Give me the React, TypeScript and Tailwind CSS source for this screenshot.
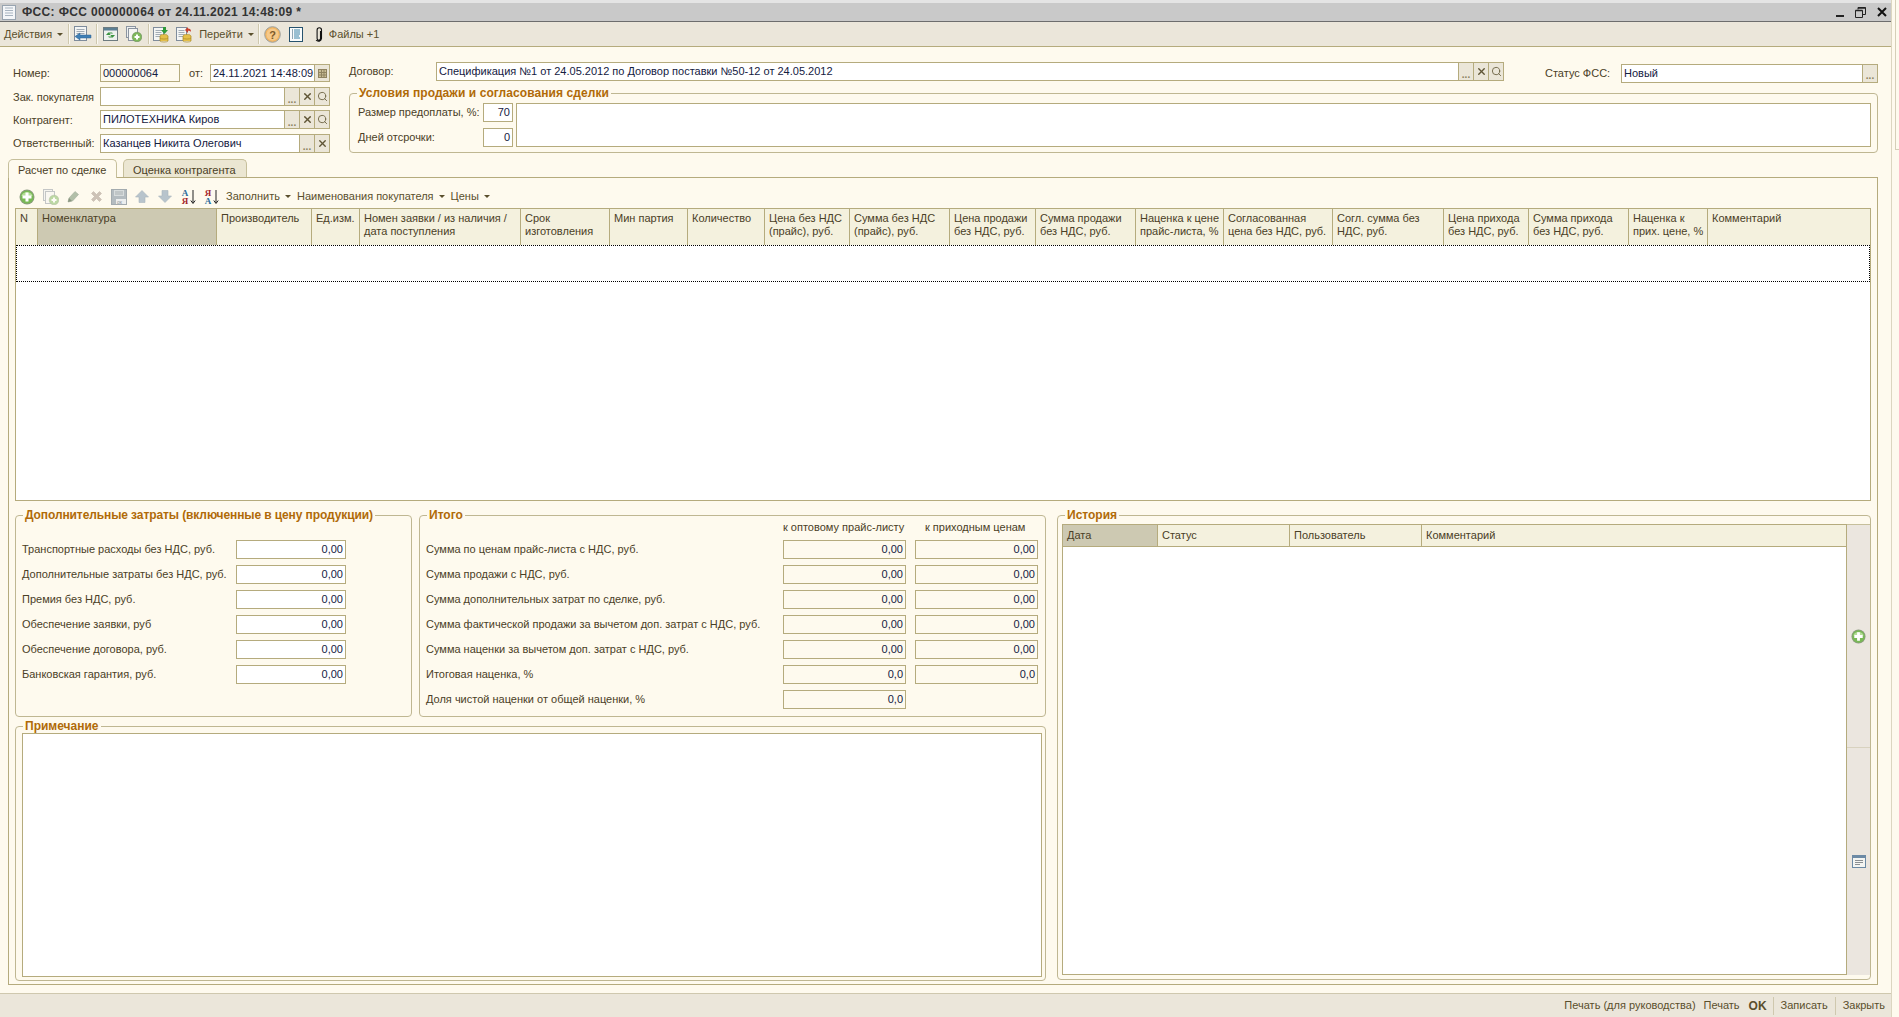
import { Search, X } from "lucide-react";
import type { ReactNode } from "react";

// column headers of the main table
const columns = [
  ["N"],
  ["Номенклатура"],
  ["Производитель"],
  ["Ед.изм."],
  ["Номен заявки / из наличия /", "дата поступления"],
  ["Срок", "изготовления"],
  ["Мин партия"],
  ["Количество"],
  ["Цена без НДС", "(прайс), руб."],
  ["Сумма без НДС", "(прайс), руб."],
  ["Цена продажи", "без НДС, руб."],
  ["Сумма продажи", "без НДС, руб."],
  ["Наценка к цене", "прайс-листа, %"],
  ["Согласованная", "цена без НДС, руб."],
  ["Согл. сумма без", "НДС, руб."],
  ["Цена прихода", "без НДС, руб."],
  ["Сумма прихода", "без НДС, руб."],
  ["Наценка к", "прих. цене, %"],
  ["Комментарий"],
];

const costRows = [
  "Транспортные расходы без НДС, руб.",
  "Дополнительные затраты без НДС, руб.",
  "Премия без НДС, руб.",
  "Обеспечение заявки, руб",
  "Обеспечение договора, руб.",
  "Банковская гарантия, руб.",
];

const totalRows = [
  ["Сумма по ценам прайс-листа с НДС, руб.", "0,00", "0,00"],
  ["Сумма продажи с НДС, руб.", "0,00", "0,00"],
  ["Сумма дополнительных затрат по сделке, руб.", "0,00", "0,00"],
  ["Сумма фактической продажи за вычетом доп. затрат с НДС, руб.", "0,00", "0,00"],
  ["Сумма наценки за вычетом доп. затрат с НДС, руб.", "0,00", "0,00"],
  ["Итоговая наценка, %", "0,0", "0,0"],
  ["Доля чистой наценки от общей наценки, %", "0,0", ""],
];

function Arrow() {
  return <span className="ml-[5px] inline-block h-0 w-0 border-x-[3px] border-t-[3px] border-x-transparent border-t-[#5a4f2c]" />;
}

function Sep({ className = "" }: { className?: string }) {
  return <span className={`h-[20px] w-[2px] border-r border-l border-r-[#fbf9f2] border-l-[#cfc8ae] ${className}`} />;
}

function GreenPlus({ size = 16 }: { size?: number }) {
  return (
    <svg width={size} height={size} viewBox="0 0 16 16">
      <circle cx="8" cy="8" r="7.5" fill="#8c9a80" />
      <circle cx="8" cy="8" r="6.6" fill="#79b956" />
      <path d="M2.5 7a5.6 4.6 0 0 1 11 0z" fill="#b4dc98" />
      <path d="M6.5 3.5h3v3h3v3h-3v3h-3v-3h-3v-3h3z" fill="#fff" />
    </svg>
  );
}

function DocLines({ x = 0.5, y = 0.5, w = 10, h = 13, color = "#7f8c9c" }) {
  return (
    <g>
      <rect x={x} y={y} width={w} height={h} fill="#f4f5f4" stroke={color} />
      <path d={`M${x + 2} ${y + 3}h${w - 4}M${x + 2} ${y + 5}h${w - 4}M${x + 2} ${y + 7}h${w - 4}M${x + 2} ${y + 9}h${w - 5}`} stroke="#a3acb5" />
    </g>
  );
}

function Coins() {
  return (
    <g>
      <ellipse cx="11" cy="10" rx="4" ry="1.6" fill="#e5c04a" stroke="#a98a24" strokeWidth=".6" />
      <rect x="7" y="10" width="8" height="5" fill="#e5c04a" />
      <path d="M7 10v5M15 10v5M7 12c1 1.4 7 1.4 8 0M7 15c1 1.4 7 1.4 8 0" stroke="#a98a24" strokeWidth=".7" fill="none" />
    </g>
  );
}

function BackIcon() {
  return (
    <svg width="18" height="16" viewBox="0 0 18 16">
      <DocLines x={0.5} y={0.5} w={12} h={14} />
      <path d="M1 10.5l5-3.5v2h11v3H6v2z" fill="#3f7fb5" stroke="#2e6390" strokeWidth=".5" />
    </svg>
  );
}

function RefreshIcon() {
  return (
    <svg width="15" height="14" viewBox="0 0 15 14">
      <rect x=".5" y=".5" width="14" height="13" fill="#eef1ee" stroke="#6d7b80" />
      <rect x="1" y="1" width="13" height="2.5" fill="#5c7f93" />
      <path d="M3 8l2.2-2.6H9l1 1.2H6.5L7.6 8zM12 8l-2.2 2.6H6L5 9.4h3.5L7.4 8z" fill="#3b9440" />
    </svg>
  );
}

function PagesPlus({ faded = false }: { faded?: boolean }) {
  return (
    <svg width="16" height="16" viewBox="0 0 16 16" className={faded ? "opacity-50" : ""}>
      <rect x=".5" y=".5" width="9" height="11" fill="#eef0f0" stroke="#8b94a0" />
      <rect x="2.5" y="2.5" width="9" height="12" fill="#f6f6f4" stroke="#8b94a0" />
      <circle cx="11" cy="11" r="4.8" fill="#7db85b" stroke="#6b8a5c" strokeWidth=".6" />
      <path d="M10 8.5h2v1.5h1.5v2H12v1.5h-2V12H8.5v-2H10z" fill="#fff" />
    </svg>
  );
}

function CoinDoc({ color, up = false }: { color: string; up?: boolean }) {
  return (
    <svg width="17" height="17" viewBox="0 0 17 17">
      <DocLines x={0.5} y={1.5} w={10} h={13} />
      <Coins />
      <path d={up ? "M9 4l3-3v1.6c2 0 3 1 3 3.4-.8-1-1.6-1.2-3-1.2V7z" : "M8 4h2V1h3v3h2l-3.5 4z"} fill={color} />
    </svg>
  );
}

function HelpIcon() {
  return (
    <svg width="17" height="17" viewBox="0 0 17 17">
      <circle cx="8.5" cy="8.5" r="7.8" fill="#f2b561" stroke="#9aa0a0" />
      <circle cx="8.5" cy="8.5" r="6" fill="#f6c98a" />
      <text x="8.5" y="12.5" textAnchor="middle" fontSize="11" fontWeight="700" fill="#7d5a2a" fontFamily="Liberation Sans, sans-serif">?</text>
    </svg>
  );
}

function ListIcon() {
  return (
    <svg width="14" height="15" viewBox="0 0 14 15">
      <rect x=".5" y=".5" width="13" height="14" fill="#f9fbfb" stroke="#26526e" />
      <path d="M3 3h1M3 5h1M3 7h1M3 9h1M3 11h1" stroke="#26526e" />
      <path d="M5 3h6M5 5h6M5 7h6M5 9h5M5 11h6" stroke="#3b84a8" />
    </svg>
  );
}

function ClipIcon() {
  return (
    <svg width="8" height="15" viewBox="0 0 8 15">
      <path d="M5.5 4v7.5a1.7 1.7 0 0 1-3.4 0V3a2.2 2.2 0 0 1 4.4 0v8.5a3 3 0 0 1-5.4 1.5" fill="none" stroke="#111" strokeWidth="1.1" />
    </svg>
  );
}

function Pencil() {
  return (
    <svg width="13" height="13" viewBox="0 0 13 13">
      <path d="M1 12l1-4 6-6.5 3.5 3L5.5 11z" fill="#b2bfa8" stroke="#a3ad9c" strokeWidth=".6" />
      <path d="M1 12l1-4 3 3z" fill="#8a9680" />
    </svg>
  );
}

function GrayX() {
  return (
    <svg width="13" height="13" viewBox="0 0 13 13">
      <path d="M1.5 3.5l2-2 3 3 3-3 2 2-3 3 3 3-2 2-3-3-3 3-2-2 3-3z" fill="#cdc2b6" stroke="#bdb1a4" strokeWidth=".5" />
    </svg>
  );
}

function SaveIcon() {
  return (
    <svg width="16" height="16" viewBox="0 0 16 16">
      <rect x=".5" y=".5" width="15" height="15" fill="#b4bcc0" stroke="#a3abaf" />
      <rect x="3" y="1" width="10" height="6" fill="#d7dcdc" />
      <path d="M4 3h8M4 5h8" stroke="#a9b0b2" />
      <rect x="5" y="10" width="10" height="5" fill="#eceeee" />
      <text x="6" y="14.5" fontSize="5" fill="#8c9498" fontFamily="Liberation Sans, sans-serif">ок</text>
    </svg>
  );
}

function MoveIcon({ down = false }: { down?: boolean }) {
  return (
    <svg width="14" height="13" viewBox="0 0 14 13" className={down ? "rotate-180" : ""}>
      <path d="M7 .5L13.5 7H10v5.5H4V7H.5z" fill="#b8c4cc" stroke="#a9b5bd" strokeWidth=".6" />
    </svg>
  );
}

function SortIcon({ reverse = false }: { reverse?: boolean }) {
  const top = reverse ? "Я" : "A";
  const bottom = reverse ? "A" : "Я";
  return (
    <svg width="16" height="17" viewBox="0 0 16 17">
      <text x="5" y="7.5" textAnchor="middle" fontSize="9" fontWeight="700" fill={reverse ? "#a3262a" : "#2a6a9a"} fontFamily="Liberation Serif, serif">{top}</text>
      <text x="5" y="16" textAnchor="middle" fontSize="9" fontWeight="700" fill={reverse ? "#2a6a9a" : "#a3262a"} fontFamily="Liberation Serif, serif">{bottom}</text>
      <path d="M13 2v13M10.8 12.5L13 15.5l2.2-3" stroke="#222" fill="none" />
    </svg>
  );
}

function CalendarIcon() {
  return (
    <svg width="9" height="9" viewBox="0 0 9 9">
      <rect x=".5" y=".5" width="8" height="8" fill="#c9bd95" stroke="#8f8360" />
      <path d="M.5 3.5h8M.5 6h8M3.5 .5v8M6 .5v8" stroke="#8f8360" />
    </svg>
  );
}

function FieldButton({ kind }: { kind: string }) {
  return (
    <span className="flex h-full w-[15px] shrink-0 items-center justify-center border-l border-[#b5ab7d] bg-[#ebe6d8]">
      {kind === "dots" && <span className="mt-[6px] text-[10px] leading-none font-bold text-[#8b8260]">...</span>}
      {kind === "clear" && <X size={11} strokeWidth={3} className="text-[#5f5535]" />}
      {kind === "search" && <Search size={11} strokeWidth={2} className="text-[#6f6545]" />}
      {kind === "date" && <CalendarIcon />}
    </span>
  );
}

function Field({
  value = "",
  className = "",
  right = false,
  buttons = [],
  tinted = false,
}: {
  value?: string;
  className?: string;
  right?: boolean;
  buttons?: string[];
  tinted?: boolean;
}) {
  return (
    <div className={`box-border flex border border-[#b5ab7d] ${tinted ? "bg-[#fefaee]" : "bg-white"} ${className}`}>
      <span className={`flex-1 overflow-hidden pr-[2px] pl-[2px] leading-[17px] whitespace-nowrap text-[#14203f] ${right ? "text-right" : ""}`}>{value}</span>
      {buttons.map((b) => (
        <FieldButton key={b} kind={b} />
      ))}
    </div>
  );
}

function Group({
  title,
  titleClass = "",
  className = "",
  children,
}: {
  title: string;
  titleClass?: string;
  className?: string;
  children?: ReactNode;
}) {
  return (
    <div className={`relative box-border rounded-[4px] border border-[#bfb792] ${className}`}>
      <span className={`absolute -top-[8px] left-[7px] bg-[#fefaee] px-[2px] text-[12px] leading-[14px] font-bold whitespace-nowrap text-[#b06a08] ${titleClass}`}>{title}</span>
      {children}
    </div>
  );
}

function TitleBar() {
  return (
    <div className="flex h-[22px] shrink-0 items-center border-t-[3px] border-b border-t-[#e4e4e4] border-b-[#6d6d6d] bg-[#c9c9c9] pr-[4px] pl-[2px]">
      <svg width="14" height="15" viewBox="0 0 14 15">
        <rect x=".5" y=".5" width="13" height="14" fill="#f4f6f8" stroke="#98a4b0" />
        <path d="M3 3h8M3 5.5h8M3 8h8M3 10.5h8" stroke="#a8b4c0" />
      </svg>
      <span className="ml-[6px] text-[12px] font-bold tracking-[0.35px] text-[#333]">ФСС: ФСС 000000064 от 24.11.2021 14:48:09 *</span>
      <div className="ml-auto flex items-center">
        <span className="mt-[8px] h-[2px] w-[8px] bg-[#222]" />
        <svg width="11" height="11" viewBox="0 0 11 11" className="ml-[11px]">
          <path d="M3 2.5V.5h7.5v7H8M.5 3.5h7v7h-7z" fill="none" stroke="#222" />
          <path d="M.5 3.5h7M3 1h7.5" stroke="#222" strokeWidth="1.4" />
        </svg>
        <svg width="10" height="10" viewBox="0 0 10 10" className="ml-[11px]">
          <path d="M1 1l8 8M9 1l-8 8" stroke="#111" strokeWidth="2" />
        </svg>
      </div>
    </div>
  );
}

function MainToolbar() {
  return (
    <div className="flex h-[25px] shrink-0 items-center border-b border-[#b5ab7d] bg-[#ebe6da] pl-[4px] text-[#5a4f2c]">
      <span>Действия</span>
      <Arrow />
      <Sep className="mr-[4px] ml-[5px]" />
      <BackIcon />
      <Sep className="mr-[4px] ml-[4px]" />
      <span className="ml-[1px]"><RefreshIcon /></span>
      <span className="ml-[8px]"><PagesPlus /></span>
      <Sep className="mr-[3px] ml-[6px]" />
      <CoinDoc color="#2f9a3a" />
      <span className="ml-[6px]"><CoinDoc color="#c8402f" up /></span>
      <span className="ml-[6px]">Перейти</span>
      <Arrow />
      <Sep className="mr-[4px] ml-[4px]" />
      <HelpIcon />
      <span className="ml-[8px]"><ListIcon /></span>
      <span className="ml-[12px]"><ClipIcon /></span>
      <span className="ml-[6px]">Файлы +1</span>
    </div>
  );
}

function HeaderForm() {
  return (
    <div className="flex shrink-0 pt-[15px] pr-[14px] pl-[13px]">
      <div className="w-[317px] shrink-0 pt-[2px]">
        <div className="flex h-[18px] items-center">
          <span className="w-[87px] pt-[1px]">Номер:</span>
          <Field value="000000064" tinted className="h-[18px] w-[80px]" />
          <span className="ml-[9px] w-[21px] pt-[1px]">от:</span>
          <Field value="24.11.2021 14:48:09" buttons={["date"]} className="h-[18px] w-[120px]" />
        </div>
        <div className="mt-[5px] flex h-[19px] items-center">
          <span className="w-[87px] pt-[1px]">Зак. покупателя</span>
          <Field buttons={["dots", "clear", "search"]} className="h-[19px] w-[230px]" />
        </div>
        <div className="mt-[4px] flex h-[19px] items-center">
          <span className="w-[87px] pt-[1px]">Контрагент:</span>
          <Field value="ПИЛОТЕХНИКА Киров" buttons={["dots", "clear", "search"]} className="h-[19px] w-[230px]" />
        </div>
        <div className="mt-[5px] flex h-[19px] items-center">
          <span className="w-[87px]">Ответственный:</span>
          <Field value="Казанцев Никита Олегович" buttons={["dots", "clear"]} className="h-[19px] w-[230px]" />
        </div>
      </div>
      <div className="ml-[19px] flex-1">
        <div className="flex h-[19px] items-center">
          <span className="w-[87px]">Договор:</span>
          <Field value="Спецификация №1 от 24.05.2012 по Договор поставки №50-12 от 24.05.2012" buttons={["dots", "clear", "search"]} className="h-[19px] w-[1068px]" />
          <span className="mt-[3px] ml-[41px] w-[76px]">Статус ФСС:</span>
          <Field value="Новый" buttons={["dots"]} className="mt-[3px] h-[19px] w-[257px]" />
        </div>
        <Group title="Условия продажи и согласования сделки" titleClass="tracking-[0.08px]" className="mt-[12px] flex h-[60px] pt-[9px] pr-[6px] pl-[8px]">
          <div className="w-[155px] shrink-0">
            <div className="flex h-[19px] items-center justify-between">
              <span className="whitespace-nowrap">Размер предоплаты, %:</span>
              <Field value="70" right className="h-[19px] w-[30px] shrink-0" />
            </div>
            <div className="mt-[6px] flex h-[19px] items-center justify-between">
              <span className="whitespace-nowrap">Дней отсрочки:</span>
              <Field value="0" right className="h-[19px] w-[30px] shrink-0" />
            </div>
          </div>
          <div className="ml-[3px] h-[44px] flex-1 border border-[#b5ab7d] bg-white" />
        </Group>
      </div>
    </div>
  );
}

function GridToolbar() {
  return (
    <div className="flex h-[30px] shrink-0 items-center pt-[7px] pl-[4px] text-[#5a4f2c]">
      <GreenPlus />
      <span className="ml-[8px]"><PagesPlus faded /></span>
      <span className="ml-[8px]"><Pencil /></span>
      <span className="ml-[10px]"><GrayX /></span>
      <span className="ml-[8px]"><SaveIcon /></span>
      <span className="ml-[8px]"><MoveIcon /></span>
      <span className="ml-[9px]"><MoveIcon down /></span>
      <span className="ml-[8px]"><SortIcon /></span>
      <span className="ml-[7px]"><SortIcon reverse /></span>
      <span className="ml-[7px]">Заполнить</span>
      <Arrow />
      <span className="ml-[6px]">Наименования покупателя</span>
      <Arrow />
      <span className="ml-[6px]">Цены</span>
      <Arrow />
    </div>
  );
}

function MainGrid() {
  return (
    <div className="flex h-[293px] shrink-0 flex-col border border-[#b5ab7d] bg-white">
      <div className="grid h-[36px] shrink-0 grid-cols-[22px_179px_95px_48px_161px_89px_78px_77px_85px_100px_86px_100px_88px_109px_111px_85px_100px_79px_1fr] bg-[#f4f1de]">
        {columns.map((lines, i) => (
          <div key={lines[0]} className={`border-r border-[#b5ab7d] pt-[3px] pl-[4px] leading-[13px] whitespace-nowrap ${i === 1 ? "bg-[#cdc9b2]" : ""} ${i === columns.length - 1 ? "border-r-0" : ""}`}>
            {lines.map((line) => (
              <div key={line}>{line}</div>
            ))}
          </div>
        ))}
      </div>
      <div className="h-[37px] shrink-0 border border-dotted border-black" />
    </div>
  );
}

function CostsGroup() {
  return (
    <Group title="Дополнительные затраты (включенные в цену продукции)" titleClass="tracking-[-0.1px]" className="h-[202px] w-[397px] shrink-0">
      <div className="grid grid-cols-[214px_110px] gap-y-[6px] pt-[24px] pl-[6px]">
        {costRows.map((label) => (
          <div key={label} className="contents">
            <span className="leading-[19px] whitespace-nowrap">{label}</span>
            <Field value="0,00" right className="h-[19px]" />
          </div>
        ))}
      </div>
    </Group>
  );
}

function TotalsGroup() {
  return (
    <Group title="Итого" className="h-[202px] flex-1">
      <div className="grid grid-cols-[357px_123px_132px] gap-y-[6px] pt-[4px] pl-[6px]">
        <span className="h-[14px]" />
        <span className="h-[14px] leading-[14px] whitespace-nowrap">к оптовому прайс-листу</span>
        <span className="ml-[19px] h-[14px] leading-[14px] whitespace-nowrap">к приходным ценам</span>
        {totalRows.map(([label, a, b]) => (
          <div key={label} className="contents">
            <span className="leading-[19px] whitespace-nowrap">{label}</span>
            <Field value={a} right tinted className="h-[19px]" />
            {b ? <Field value={b} right tinted className="ml-[9px] h-[19px] w-[123px]" /> : <span />}
          </div>
        ))}
      </div>
    </Group>
  );
}

function HistoryGroup() {
  return (
    <Group title="История" className="ml-[11px] flex h-[465px] flex-1 pt-[8px] pr-0 pb-[4px] pl-[4px]">
      <div className="flex flex-1 flex-col border border-[#b5ab7d] bg-white">
        <div className="grid h-[22px] shrink-0 grid-cols-[95px_132px_132px_1fr] border-b border-[#b5ab7d] bg-[#f4f1de] leading-[20px]">
          <span className="border-r border-[#b5ab7d] bg-[#cdc9b2] pl-[4px]">Дата</span>
          <span className="border-r border-[#b5ab7d] pl-[4px]">Статус</span>
          <span className="border-r border-[#b5ab7d] pl-[4px]">Пользователь</span>
          <span className="pl-[4px]">Комментарий</span>
        </div>
      </div>
      <div className="flex w-[23px] shrink-0 flex-col border-t border-[#c6bf9b] bg-[#ebe6df]">
        <div className="flex h-[223px] shrink-0 items-center justify-center border-b border-[#d8d2bf]">
          <GreenPlus size={15} />
        </div>
        <div className="flex flex-1 items-center justify-center">
          <svg width="14" height="13" viewBox="0 0 14 13">
            <rect x=".5" y=".5" width="13" height="12" fill="#f4f5f2" stroke="#6c8aa5" />
            <rect x="1" y="1" width="12" height="2" fill="#6c8aa5" />
            <path d="M3 5.5h8M3 7.5h8M3 9.5h5" stroke="#8b8f92" />
          </svg>
        </div>
      </div>
    </Group>
  );
}

function TabPanel() {
  return (
    <div className="mt-[6px] ml-[8px] flex w-[1870px] flex-col">
      <div className="flex h-[18px] shrink-0 items-end">
        <div className="relative z-10 -mb-px h-[19px] w-[109px] rounded-t-[5px] border border-b-0 border-[#c6bf9b] bg-[#fefaee] pt-[2px] pl-[9px]">Расчет по сделке</div>
        <div className="ml-[6px] h-[18px] w-[124px] rounded-t-[5px] border border-b-0 border-[#c6bf9b] bg-[#ebe6d2] pt-[2px] pl-[9px]">Оценка контрагента</div>
      </div>
      <div className="box-border flex h-[808px] flex-col border border-[#b5ab7d] pr-[6px] pl-[6px]">
        <GridToolbar />
        <MainGrid />
        <div className="mt-[14px] flex">
          <div className="w-[1031px] shrink-0">
            <div className="flex gap-[7px]">
              <CostsGroup />
              <TotalsGroup />
            </div>
            <Group title="Примечание" className="mt-[9px] h-[255px] pt-[6px] pr-[3px] pl-[6px]">
              <div className="h-[244px] border border-[#b5ab7d] bg-white" />
            </Group>
          </div>
          <HistoryGroup />
        </div>
      </div>
    </div>
  );
}

function Footer() {
  return (
    <div className="mt-auto flex h-[24px] shrink-0 items-center justify-end border-t border-[#cfc8ae] bg-[#ebe6da] pr-[6px] text-[#5a4f2c]">
      <span>Печать (для руководства)</span>
      <span className="ml-[8px]">Печать</span>
      <span className="ml-[9px] text-[12px] font-bold">OK</span>
      <span className="ml-[6px] h-[18px] w-px bg-[#cfc8ae]" />
      <span className="ml-[7px]">Записать</span>
      <span className="ml-[7px] h-[18px] w-px bg-[#cfc8ae]" />
      <span className="ml-[7px]">Закрыть</span>
    </div>
  );
}

export default function App() {
  return (
    <div className="flex h-[1017px] w-[1899px] overflow-hidden bg-[#fefaee] font-['Liberation_Sans',sans-serif] text-[11px] text-[#4a4026]">
      <div className="flex w-[1892px] shrink-0 flex-col border-r border-[#dcd6c0]">
        <TitleBar />
        <MainToolbar />
        <HeaderForm />
        <TabPanel />
        <Footer />
      </div>
      <div className="w-[7px] shrink-0">
        <div className="ml-[3px] h-[150px] w-[4px] border-b border-l border-[#d5cfb8]" />
      </div>
    </div>
  );
}
